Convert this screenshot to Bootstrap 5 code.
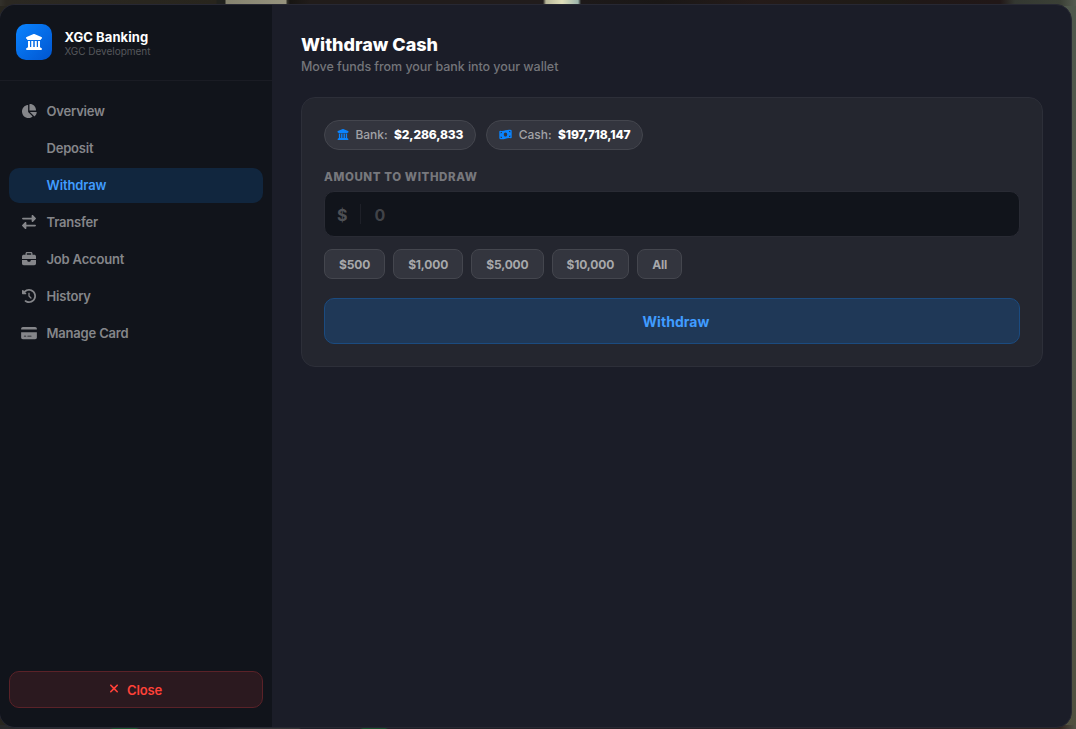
<!DOCTYPE html>
<html lang="en">
<head>
<meta charset="utf-8">
<meta name="viewport" content="width=device-width, initial-scale=1">
<title>XGC Banking</title>
<link href="https://cdn.jsdelivr.net/npm/bootstrap@5.3.0/dist/css/bootstrap.min.css" rel="stylesheet">
<style>
body{font-family:Inter,"Liberation Sans",sans-serif;font-size:13px;line-height:1.2;color:#fff;height:729px;overflow:hidden;padding:4px 4px 1px 0;
background:linear-gradient(90deg,#33312b 0,#2b2822 6px,#28251d 216px,#20211d 217px,#20211d 225px,#85836f 226px,#96937e 286px,#34332b 287px,#171512 290px,#211c1a 310px,#211c1c 543px,#b9b89a 546px,#e0dfba 562px,#9db5ac 578px,#1d1919 581px,#1a1716 660px,#251b19 760px,#1e1b16 890px,#201817 920px,#211717 1000px,#343832 1015px,#3b4036 1060px,#555b50) top/100% 6px no-repeat,
linear-gradient(90deg,#29292b 0,#2a2b2d 110px,#174d2a 113px,#17562b 136px,#232527 139px,#222326 215px,#363636 240px,#333 299px,#202127 301px,#202127 360px,#154d29 363px,#154d29 385px,#202126 388px,#291d24 900px,#31241f 1060px,#535347) bottom/100% 4px no-repeat,
linear-gradient(#4f574b,#575b4d 50%,#50503f) right/20px 100% no-repeat,#28261f}
.app-window{margin-left:-1px;width:1073px;height:724px;border:1px solid #272833;border-radius:16px;background:#1b1d28;overflow:hidden}
.side{width:272px;background:#11141b;flex:none}
.brand-row{height:76px;padding:0 16px 1px 16.4px;border-bottom:1px solid #1a1c24}
.logo-box{width:36px;height:36px;border-radius:10px;background:linear-gradient(135deg,#0a84ff,#0055d0)}
.brand-text{margin-left:12px;padding-top:4px}
.brand-name{font-size:13px;font-weight:700;line-height:15px;letter-spacing:.08px}
.brand-sub{font-size:10px;color:#55575b;line-height:13px;letter-spacing:-.03px}
.menu{padding:13px 9.5px 0 8.5px;gap:2px}
.menu .nav-link{height:35px;padding:0 12px;border-radius:10px;color:#85868a;font-weight:600;letter-spacing:-.19px;gap:9px}
.menu .nav-link.active{background:#11263e;color:#409cff;font-weight:600;letter-spacing:-.12px}
.ico{fill:currentColor;height:14px;width:16px;flex:none;margin-right:1px}
.menu svg.ico{margin-top:-2px}
.close-btn{height:37px;margin:0 9.5px 19.5px 8.5px;border:1px solid #5a2228;border-radius:10px;background:#2b191f;color:#ff4138;font-size:13px;font-weight:600;letter-spacing:-.15px;line-height:16px;gap:8px}
.close-btn span{padding-top:1px}
.close-btn svg{margin-top:-2px}
.content-pane{padding:29px 28px 0 29px}
h1{font-size:18px;font-weight:800;line-height:22px;margin:0}
.sub-line{color:#74757a;font-size:12.5px;font-weight:500;line-height:16px;margin-top:3px;letter-spacing:-.05px}
.panel{margin-top:22px;height:270px;border:1px solid #2d2f39;border-radius:14px;background:#24262f;padding:22px}
.pill{height:30px;border:1px solid #44464e;border-radius:15px;background:#33353e;padding:1px 12px 0;color:#a1a2a6;font-size:12px;font-weight:500;gap:6.4px}
.pill b{color:#fff;font-weight:800;letter-spacing:-.14px}
.pill svg{fill:#0a84ff;height:11px;flex:none;margin-top:-2px}
.field-label{margin-top:20px;color:#77787d;font-size:11.5px;font-weight:800;letter-spacing:.6px;line-height:14px}
.amount{height:46px;margin-top:7px;border:1px solid #292b34;border-radius:10px;background:#11141b;color:#4e5055;font-size:16px;font-weight:700}
.amount span{height:20px;line-height:22px}
.amount span:first-child{width:35.5px;border-right:1px solid #1e2028;padding-left:12px}
.amount span:last-child{padding-left:14px;color:#414348;line-height:23px}
.quick{gap:8px;margin-top:12px}
.quick .btn{height:30px;border:1px solid #44464e;border-radius:8px;background:#33353e;color:#a7a8ab;padding:1px 14px 0;font-size:12px;font-weight:700;letter-spacing:-.15px;line-height:27px}
.go{height:46px;margin-top:19px;border:1px solid #1b4b80;border-radius:10px;background:#1f3857;color:#409cff;font-weight:700;font-size:14px;letter-spacing:.05px;gap:8px}
</style>
</head>
<body>
<svg class="d-none"><symbol id="bank" viewBox="0 0 512 512"><path d="M243.4 2.6l-224 96c-14 6-21.8 21-18.7 35.8S16.8 160 32 160v8c0 13.3 10.7 24 24 24H456c13.3 0 24-10.7 24-24v-8c15.2 0 28.3-10.7 31.3-25.6s-4.8-29.9-18.7-35.8l-224-96c-8-3.4-17.2-3.4-25.2 0zM128 224H64V420.3c-.6 .3-1.2 .7-1.8 1.1l-48 32c-11.7 7.8-17 22.4-12.9 35.9S17.9 512 32 512H480c14.1 0 26.5-9.2 30.6-22.7s-1.1-28.1-12.9-35.9l-48-32c-.6-.4-1.2-.7-1.8-1.1V224H384V416H344V224H280V416H232V224H168V416H128V224z"/></symbol></svg>
<div class="app-window d-flex">
<aside class="side d-flex flex-column">
  <div class="brand-row d-flex align-items-center">
    <div class="logo-box d-flex align-items-center justify-content-center"><svg width="16" height="16" fill="#fff"><use href="#bank"/></svg></div>
    <div class="brand-text"><div class="brand-name">XGC Banking</div><div class="brand-sub">XGC Development</div></div>
  </div>
  <nav class="menu nav flex-column flex-nowrap">
    <a class="nav-link d-flex align-items-center"><svg class="ico" viewBox="0 0 576 512"><path d="M304 240V16.6c0-9 7-16.6 16-16.6C443.7 0 544 100.3 544 224c0 9-7.6 16-16.6 16H304zM32 272C32 150.7 122.1 50.3 239 34.3c9.2-1.3 17 6.1 17 15.4V288L412.5 444.5c6.7 6.7 6.2 17.7-1.5 23.1C371.8 495.6 323.8 512 272 512C139.5 512 32 404.6 32 272zm526.4 16c9.3 0 16.6 7.8 15.4 17c-7.7 55.9-34.6 105.6-73.9 142.3c-6 5.6-15.4 5.2-21.2-.7L320 288H558.4z"/></svg>Overview</a>
    <a class="nav-link d-flex align-items-center"><span class="ico"></span>Deposit</a>
    <a class="nav-link active d-flex align-items-center"><span class="ico"></span>Withdraw</a>
    <a class="nav-link d-flex align-items-center"><svg class="ico" viewBox="0 0 512 512"><path d="M32 96l320 0V32c0-12.9 7.8-24.6 19.8-29.6s25.7-2.2 34.9 6.9l96 96c6 6 9.4 14.1 9.4 22.6s-3.4 16.6-9.4 22.6l-96 96c-9.2 9.2-22.9 11.9-34.9 6.9s-19.8-16.6-19.8-29.6V160L32 160c-17.7 0-32-14.3-32-32s14.3-32 32-32zM480 352c17.7 0 32 14.3 32 32s-14.3 32-32 32H160v64c0 12.9-7.8 24.6-19.8 29.6s-25.7 2.2-34.9-6.9l-96-96c-6-6-9.4-14.1-9.4-22.6s3.4-16.6 9.4-22.6l96-96c9.2-9.2 22.9-11.9 34.9-6.9s19.8 16.6 19.8 29.6l0 64H480z"/></svg>Transfer</a>
    <a class="nav-link d-flex align-items-center"><svg class="ico" viewBox="0 0 512 512"><path d="M184 48H328c4.4 0 8 3.6 8 8V96H176V56c0-4.4 3.6-8 8-8zm-56 8V96H64C28.7 96 0 124.7 0 160v96H192 320 512V160c0-35.3-28.7-64-64-64H384V56c0-30.9-25.1-56-56-56H184c-30.9 0-56 25.1-56 56zM512 288H320v32c0 17.7-14.3 32-32 32H224c-17.7 0-32-14.3-32-32V288H0V416c0 35.3 28.7 64 64 64H448c35.3 0 64-28.7 64-64V288z"/></svg>Job Account</a>
    <a class="nav-link d-flex align-items-center"><svg class="ico" viewBox="0 0 512 512"><path d="M75 75L41 41C25.9 25.9 0 36.6 0 57.9V168c0 13.3 10.7 24 24 24H134.1c21.4 0 32.1-25.9 17-41l-30.8-30.8C155 85.5 203 64 256 64c106 0 192 86 192 192s-86 192-192 192c-40.8 0-78.6-12.7-109.7-34.4c-14.5-10.1-34.4-6.6-44.6 7.9s-6.6 34.4 7.9 44.6C151.2 495 201.7 512 256 512c141.4 0 256-114.6 256-256S397.4 0 256 0C185.3 0 121.3 28.7 75 75zm181 53c-13.3 0-24 10.7-24 24V256c0 6.4 2.5 12.5 7 17l72 72c9.4 9.4 24.6 9.4 33.9 0s9.4-24.6 0-33.9l-65-65V152c0-13.3-10.7-24-24-24z"/></svg>History</a>
    <a class="nav-link d-flex align-items-center"><svg class="ico" viewBox="0 0 576 512"><path d="M64 32C28.7 32 0 60.7 0 96v32H576V96c0-35.3-28.7-64-64-64H64zM576 224H0V416c0 35.3 28.7 64 64 64H512c35.3 0 64-28.7 64-64V224zM112 352h64c8.8 0 16 7.2 16 16s-7.2 16-16 16H112c-8.8 0-16-7.2-16-16s7.2-16 16-16zm112 16c0-8.8 7.2-16 16-16H368c8.8 0 16 7.2 16 16s-7.2 16-16 16H240c-8.8 0-16-7.2-16-16z"/></svg>Manage Card</a>
  </nav>
  <button class="close-btn btn p-0 mt-auto d-flex align-items-center justify-content-center"><svg width="10" height="13" viewBox="0 0 384 512" fill="currentColor"><path d="M342.6 150.6c12.5-12.5 12.5-32.8 0-45.3s-32.8-12.5-45.3 0L192 210.7 86.6 105.4c-12.5-12.5-32.8-12.5-45.3 0s-12.5 32.8 0 45.3L146.7 256 41.4 361.4c-12.5 12.5-12.5 32.8 0 45.3s32.8 12.5 45.3 0L192 301.3 297.4 406.6c12.5 12.5 32.8 12.5 45.3 0s12.5-32.8 0-45.3L237.3 256 342.6 150.6z"/></svg><span>Close</span></button>
</aside>
<main class="content-pane flex-grow-1">
  <h1>Withdraw Cash</h1>
  <div class="sub-line">Move funds from your bank into your wallet</div>
  <section class="panel">
    <div class="d-flex" style="gap:10px">
      <div class="pill d-flex align-items-center"><svg width="12"><use href="#bank"/></svg><span>Bank:</span><b>$2,286,833</b></div>
      <div class="pill d-flex align-items-center"><svg width="13" viewBox="0 0 576 512"><path d="M0 112.5V422.3c0 18 10.1 35 27 41.3c87 32.5 174 10.3 261-11.9c79.8-20.3 159.6-40.7 239.3-18.9c23 6.3 48.7-9.5 48.7-33.4V89.7c0-18-10.1-35-27-41.3C462 15.9 375 38.1 288 60.3C208.2 80.6 128.4 100.9 48.7 79.1C25.6 72.8 0 88.6 0 112.5zM288 352c-44.2 0-80-43-80-96s35.8-96 80-96s80 43 80 96s-35.8 96-80 96zM64 352c35.3 0 64 28.7 64 64H64V352zm64-208c0 35.3-28.7 64-64 64V144h64zM512 304v64H448c0-35.3 28.7-64 64-64zM448 96h64v64c-35.3 0-64-28.7-64-64z"/></svg><span>Cash:</span><b>$197,718,147</b></div>
    </div>
    <div class="field-label">AMOUNT TO WITHDRAW</div>
    <div class="amount d-flex align-items-center"><span>$</span><span>0</span></div>
    <div class="quick d-flex"><button class="btn">$500</button><button class="btn">$1,000</button><button class="btn">$5,000</button><button class="btn">$10,000</button><button class="btn">All</button></div>
    <button class="go btn p-0 w-100 d-flex align-items-center justify-content-center"><span></span>Withdraw</button>
  </section>
</main>
</div>
<script src="https://cdn.jsdelivr.net/npm/bootstrap@5.3.0/dist/js/bootstrap.bundle.min.js"></script>
</body>
</html>
